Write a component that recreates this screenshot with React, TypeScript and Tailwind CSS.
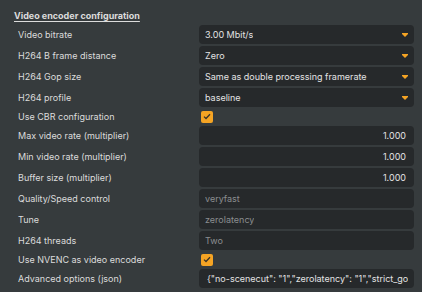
import React from 'react';

type Row =
    | { label: string; kind: 'select'; value: string }
    | { label: string; kind: 'number'; value: string }
    | { label: string; kind: 'text'; value: string; muted?: boolean }
    | { label: string; kind: 'check' };

const rows: Row[] = [
    { label: 'Video bitrate', kind: 'select', value: '3.00 Mbit/s' },
    { label: 'H264 B frame distance', kind: 'select', value: 'Zero' },
    { label: 'H264 Gop size', kind: 'select', value: 'Same as double processing framerate' },
    { label: 'H264 profile', kind: 'select', value: 'baseline' },
    { label: 'Use CBR configuration', kind: 'check' },
    { label: 'Max video rate (multiplier)', kind: 'number', value: '1.000' },
    { label: 'Min video rate (multiplier)', kind: 'number', value: '1.000' },
    { label: 'Buffer size (multiplier)', kind: 'number', value: '1.000' },
    { label: 'Quality/Speed control', kind: 'text', value: 'veryfast', muted: true },
    { label: 'Tune', kind: 'text', value: 'zerolatency', muted: true },
    { label: 'H264 threads', kind: 'text', value: 'Two', muted: true },
    { label: 'Use NVENC as video encoder', kind: 'check' },
    { label: 'Advanced options (json)', kind: 'text', value: '{"no-scenecut": "1","zerolatency": "1","strict_gop": "1"}' },
];

const Caret = () => (
    <svg width="6" height="4" viewBox="0 0 6 4" className="shrink-0">
        <path d="M0 0H6V1L3 4L0 1Z" fill="#f5a424" />
    </svg>
);

const Check = () => (
    <div className="flex h-[12px] w-[12px] items-center justify-center rounded-[2px] bg-[#f5a424]">
        <svg width="8" height="7" viewBox="0 0 8 7">
            <path d="M1 3.6L3 5.5L7 1.2" fill="none" stroke="#3a3226" strokeWidth="1.3" />
        </svg>
    </div>
);

const Field: React.FC<{ row: Row }> = ({ row }) => {
    if (row.kind === 'check') {
        return (
            <div className="flex h-[15px] items-center pl-[2px]">
                <Check />
            </div>
        );
    }
    if (row.kind === 'select') {
        return (
            <div className="flex h-[19px] items-center justify-between rounded-[4px] bg-[#26292b] pl-[6px] pr-[6px] text-[#e3e3e3]">
                <span className="truncate">{row.value}</span>
                <Caret />
            </div>
        );
    }
    if (row.kind === 'number') {
        return (
            <div className="flex h-[19px] items-center justify-end rounded-[4px] bg-[#26292b] pr-[8px] text-[#e3e3e3]">
                {row.value}
            </div>
        );
    }
    return (
        <div
            className={`flex h-[19px] items-center overflow-hidden whitespace-nowrap rounded-[4px] bg-[#26292b] ${
                row.muted ? 'pl-[6px] text-[#8b8e90]' : 'pl-[8px] pr-[6px] text-[#e3e3e3]'
            }`}
        >
            <span className="overflow-hidden">{row.value}</span>
        </div>
    );
};

export default function App() {
    return (
        <div className="h-[292px] w-[422px] overflow-hidden bg-[#363b3d] pl-[14px] pr-[8px] pt-[9px] font-['Inter',sans-serif] text-[9px] text-[#dcdcdc]">
            <h2 className="mb-[3px] h-[13px] text-[9px] font-bold leading-[13px] underline underline-offset-2">
                Video encoder configuration
            </h2>
            <div className="grid grid-cols-[181px_1fr] gap-y-[2px] pl-[4px]">
                {rows.map((row) => (
                    <React.Fragment key={row.label}>
                        <div className="flex items-center">{row.label}</div>
                        <Field row={row} />
                    </React.Fragment>
                ))}
            </div>
        </div>
    );
}
